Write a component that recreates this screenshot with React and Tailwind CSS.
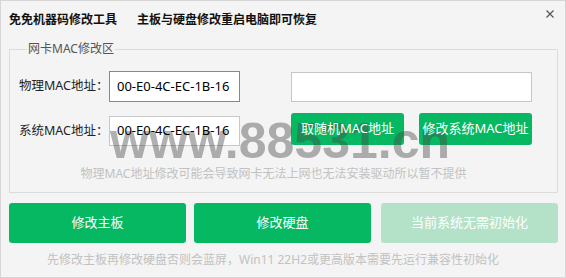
import React from "react";

const font = { fontFamily: '"Noto Sans", "Noto Sans CJK SC", sans-serif' };

export default function App() {
  return (
    <div
      className="relative w-[566px] h-[278px] bg-[#f4f4f4] border border-[#d6d6d6] overflow-hidden text-[12px]"
      style={font}
    >
      {/* title bar */}
      <div className="flex h-[37px] justify-between">
        <div className="flex items-center pl-[8px] gap-[20px] font-bold text-[12px] text-[#111]">
          <span>免免机器码修改工具</span>
          <span>主板与硬盘修改重启电脑即可恢复</span>
        </div>
        <div className="mt-[9px] mr-[11px]">
          <svg width="8" height="8" viewBox="0 0 8 8">
            <path d="M0.5 0.5 L7.5 7.5 M7.5 0.5 L0.5 7.5" stroke="#555" strokeWidth="1.2" />
          </svg>
        </div>
      </div>

      {/* group box */}
      <fieldset className="ml-[8px] mt-[3px] w-[549px] border border-[#dcdcdc] px-[9px] pb-[10px]">
        <legend className="ml-[8px] px-[1px] leading-[16px] text-[12px] text-[#555]">网卡MAC修改区</legend>

        <div className="flex items-center h-[31px] mt-[14px]">
          <div className="w-[90px] whitespace-nowrap text-[12.5px] text-[#222]">物理MAC地址：</div>
          <div className="w-[131px] h-[31px] border border-[#45b54f] bg-white flex items-center pl-[7px] text-[13px] text-black">
            <span className="relative z-10">00-E0-4C-EC-1B-16</span>
          </div>
          <div className="ml-[51px] w-[241px] h-[30px] border border-[#c6c6c6] bg-white"></div>
        </div>

        <div className="flex items-start mt-[11px]">
          <div className="w-[90px] h-[30px] mt-[3px] whitespace-nowrap flex items-center text-[12.5px] text-[#222]">系统MAC地址：</div>
          <div className="w-[131px] h-[30px] mt-[3px] border border-[#c8c8c8] bg-white flex items-center pl-[7px] text-[13px] text-black">
            <span className="relative z-10">00-E0-4C-EC-1B-16</span>
          </div>
          <button className="ml-[51px] w-[113px] h-[32px] rounded-[3px] bg-[#07b863] text-white text-[13px] flex items-center justify-center">
            <span className="relative z-10">取随机MAC地址</span>
          </button>
          <button className="ml-[15px] w-[113px] h-[32px] rounded-[3px] bg-[#07b863] text-white text-[13px] flex items-center justify-center">
            <span className="relative z-10">修改系统MAC地址</span>
          </button>
        </div>

        <div className="mt-[20px] leading-[16px] text-center pr-[20px] text-[#c2c2c2]">
          物理MAC地址修改可能会导致网卡无法上网也无法安装驱动所以暂不提供
        </div>
      </fieldset>

      {/* bottom buttons */}
      <div className="flex ml-[8px] mt-[10px]">
        <button className="w-[177px] h-[40px] rounded-[3px] bg-[#07b863] text-white text-[13px] flex items-center justify-center">
          修改主板
        </button>
        <button className="ml-[8px] w-[177px] h-[40px] rounded-[3px] bg-[#07b863] text-white text-[13px] flex items-center justify-center">
          修改硬盘
        </button>
        <button className="ml-[10px] w-[177px] h-[40px] rounded-[3px] bg-[#b4e2c9] text-white text-[13px] flex items-center justify-center">
          当前系统无需初始化
        </button>
      </div>

      <div className="mt-[9px] leading-[16px] text-center pr-[20px] text-[#c2c2c2]">
        先修改主板再修改硬盘否则会蓝屏，Win11 22H2或更高版本需要先运行兼容性初始化
      </div>

      {/* watermark */}
      <div
        className="pointer-events-none absolute left-[109px] top-[115px] text-[50px] leading-[50px] font-bold text-[rgba(70,70,70,0.42)] whitespace-nowrap"
        style={{ fontFamily: '"Liberation Sans", Arial, sans-serif' }}
      >
        www.88531.cn
      </div>
    </div>
  );
}
